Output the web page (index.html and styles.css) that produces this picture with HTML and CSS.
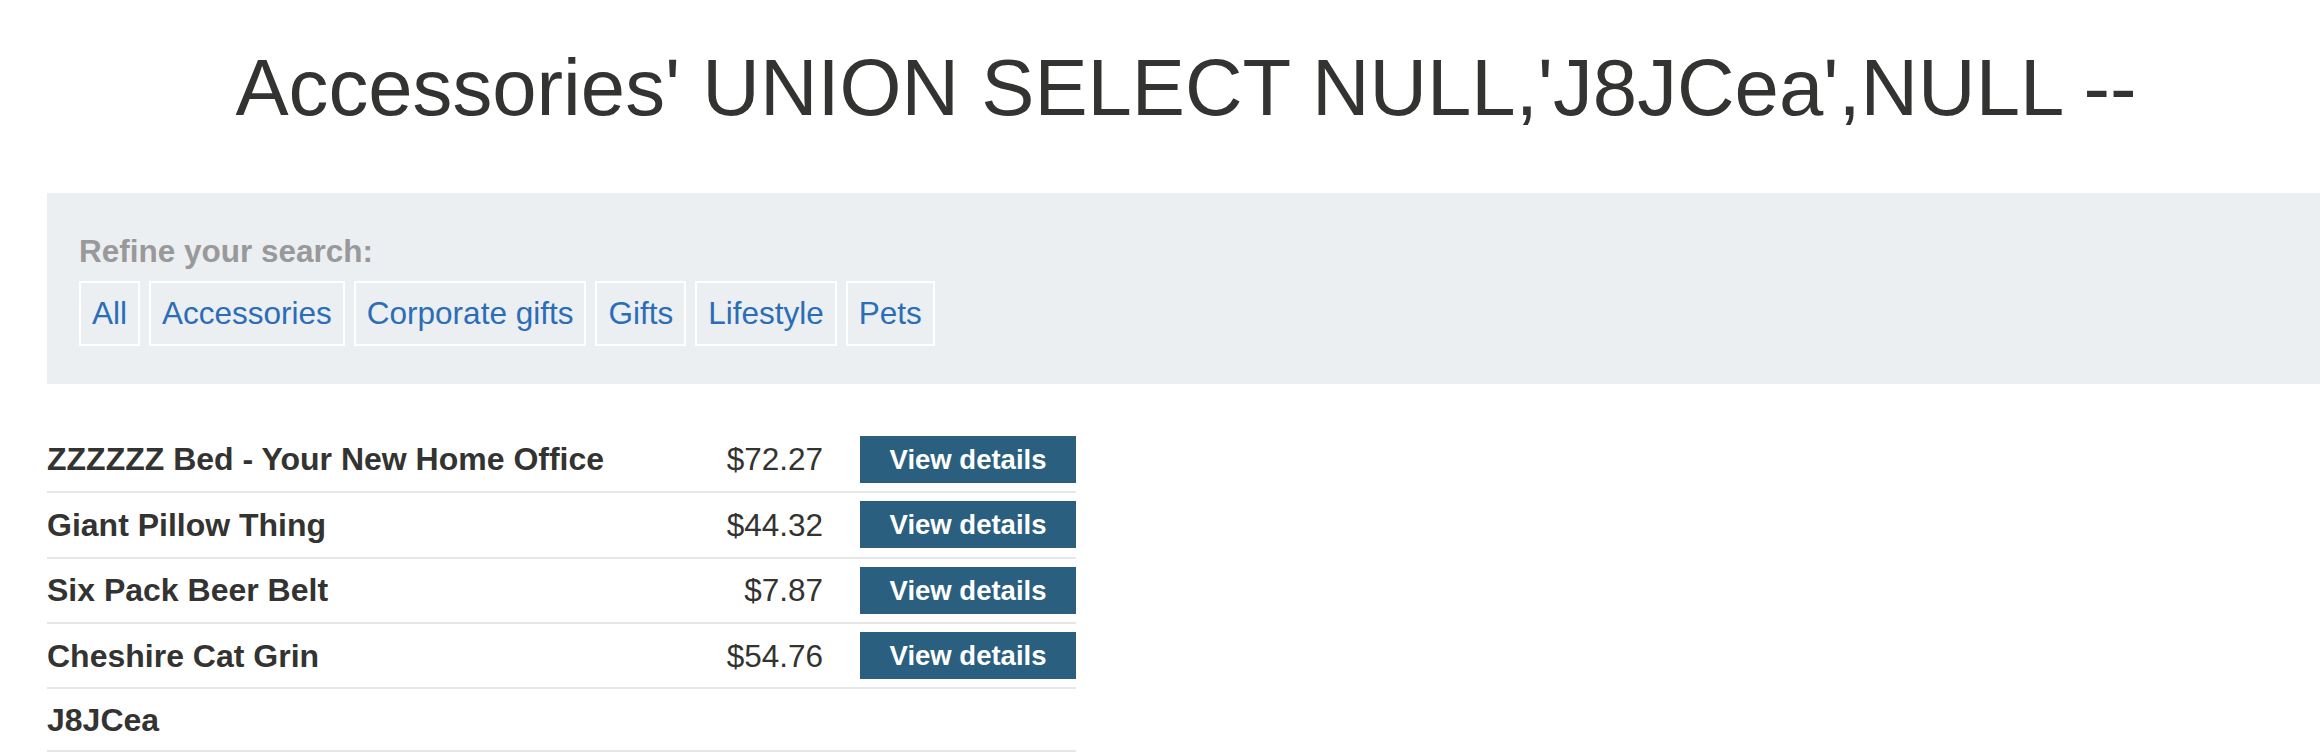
FILE: index.html
```html
<!DOCTYPE html>
<html lang="en">
<head>
<meta charset="utf-8">
<title>Accessories</title>
<link rel="stylesheet" href="styles.css">
</head>
<body>
<main class="page">
  <h1 class="title">Accessories' UNION SELECT NULL,'J8JCea',NULL --</h1>
  <section class="filters">
    <div class="filters-label">Refine your search:</div>
    <nav class="filter-list">
      <a class="filter" href="#">All</a>
      <a class="filter" href="#">Accessories</a>
      <a class="filter" href="#">Corporate gifts</a>
      <a class="filter" href="#">Gifts</a>
      <a class="filter" href="#">Lifestyle</a>
      <a class="filter" href="#">Pets</a>
    </nav>
  </section>
  <table class="products">
    <tbody>
      <tr>
        <th class="name">ZZZZZZ Bed - Your New Home Office</th>
        <td class="price">$72.27</td>
        <td class="action"><a class="button" href="#">View details</a></td>
      </tr>
      <tr>
        <th class="name">Giant Pillow Thing</th>
        <td class="price">$44.32</td>
        <td class="action"><a class="button" href="#">View details</a></td>
      </tr>
      <tr>
        <th class="name">Six Pack Beer Belt</th>
        <td class="price">$7.87</td>
        <td class="action"><a class="button" href="#">View details</a></td>
      </tr>
      <tr>
        <th class="name">Cheshire Cat Grin</th>
        <td class="price">$54.76</td>
        <td class="action"><a class="button" href="#">View details</a></td>
      </tr>
      <tr class="text-row">
        <th class="name">J8JCea</th>
        <td class="price"></td>
        <td class="action"></td>
      </tr>
    </tbody>
  </table>
</main>
</body>
</html>
```

FILE: styles.css
```css
html, body {
  margin: 0;
  padding: 0;
  background: #ffffff;
}

body {
  font-family: "Liberation Sans", Arial, sans-serif;
  color: #333332;
  overflow: hidden;
}

.page {
  display: block;
}

.title {
  margin: 0;
  padding: 48.4px 0 0 52px;
  font-size: 79.7px;
  line-height: 80px;
  font-weight: normal;
  text-align: center;
  color: #333332;
  white-space: nowrap;
}

.filters {
  margin: 64.6px 0 0 47px;
  padding: 40px 0 38px 32px;
  background: #eceff2;
}

.filters-label {
  font-size: 31.5px;
  line-height: 36px;
  font-weight: bold;
  color: #999999;
}

.filter-list {
  display: flex;
  gap: 9px;
  margin-top: 12px;
}

.filter {
  display: block;
  border: 2px solid #ffffff;
  padding: 0 11px;
  font-size: 31.5px;
  line-height: 61px;
  color: #2b6db6;
  text-decoration: none;
  white-space: nowrap;
}

.products {
  margin: 43.8px 0 0 47px;
  width: 1029px;
  border-collapse: collapse;
  border-spacing: 0;
}

.products th,
.products td {
  padding: 8.2px 0;
  border-bottom: 2px solid #e6e6e6;
  vertical-align: middle;
  font-size: 31.5px;
  line-height: 36px;
}

.products .name {
  width: 100%;
  text-align: left;
  font-size: 32px;
  font-weight: bold;
  color: #333332;
  white-space: nowrap;
}

.products .price {
  text-align: right;
  padding-right: 37px;
  font-weight: normal;
  color: #333332;
  white-space: nowrap;
}

.products .action {
  white-space: nowrap;
}

.products .text-row th,
.products .text-row td {
  padding-top: 12.3px;
  padding-bottom: 12.3px;
}

.button {
  display: block;
  height: 47px;
  padding: 0 28px;
  box-sizing: border-box;
  background: #2a5f7f;
  color: #ffffff;
  font-size: 27.5px;
  line-height: 47px;
  font-weight: bold;
  text-decoration: none;
  text-align: center;
  width: 216px;
}
```
